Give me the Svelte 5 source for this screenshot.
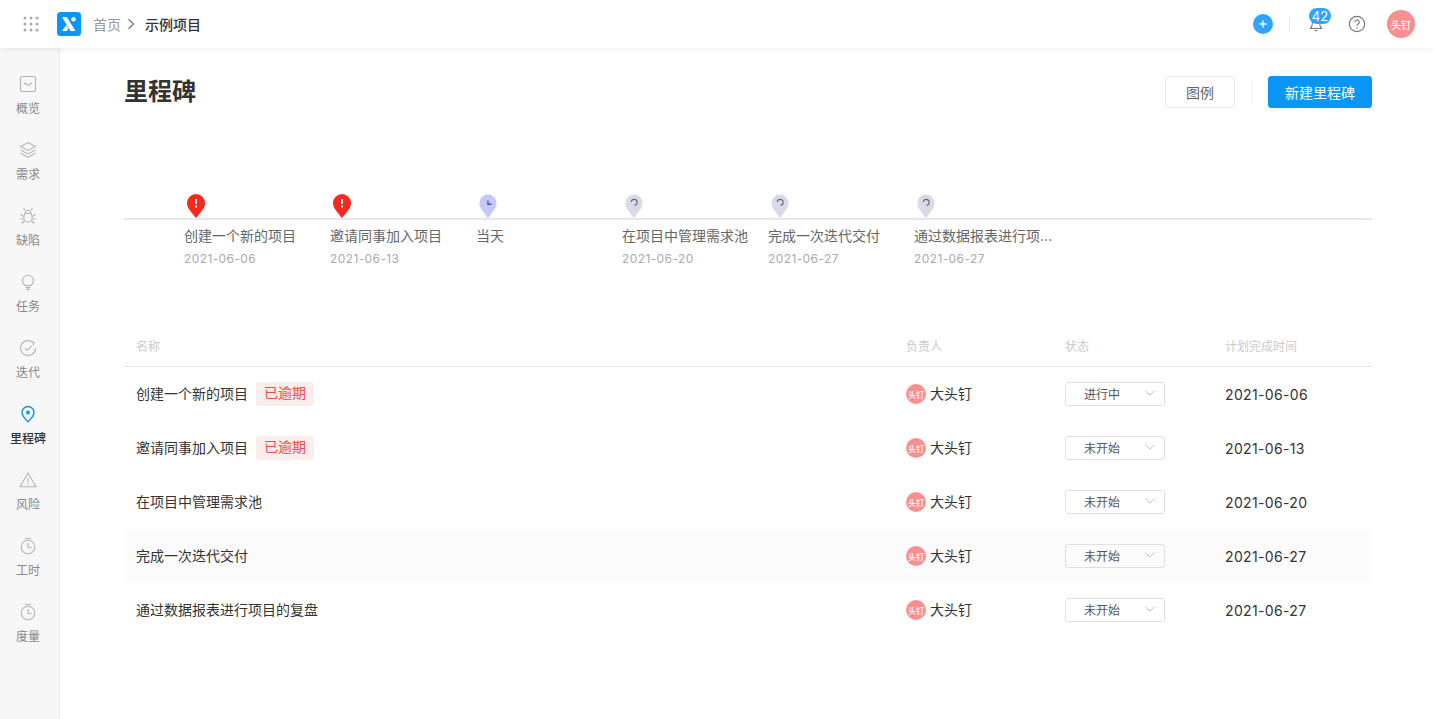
<script lang="ts">
  const nav = [
    { label: '概览', icon: 'overview' },
    { label: '需求', icon: 'layers' },
    { label: '缺陷', icon: 'bug' },
    { label: '任务', icon: 'bulb' },
    { label: '迭代', icon: 'cycle' },
    { label: '里程碑', icon: 'pin', active: true },
    { label: '风险', icon: 'warn' },
    { label: '工时', icon: 'timer' },
    { label: '度量', icon: 'timer' }
  ];

  const milestones = [
    { name: '创建一个新的项目', date: '2021-06-06', kind: 'late' },
    { name: '邀请同事加入项目', date: '2021-06-13', kind: 'late' },
    { name: '当天', date: '', kind: 'today' },
    { name: '在项目中管理需求池', date: '2021-06-20', kind: 'todo' },
    { name: '完成一次迭代交付', date: '2021-06-27', kind: 'todo' },
    { name: '通过数据报表进行项目的复盘', date: '2021-06-27', kind: 'todo' }
  ];

  const rows = [
    { name: '创建一个新的项目', late: true, status: '进行中', date: '2021-06-06' },
    { name: '邀请同事加入项目', late: true, status: '未开始', date: '2021-06-13' },
    { name: '在项目中管理需求池', status: '未开始', date: '2021-06-20' },
    { name: '完成一次迭代交付', status: '未开始', date: '2021-06-27', hover: true },
    { name: '通过数据报表进行项目的复盘', status: '未开始', date: '2021-06-27' }
  ];
</script>

<div class="page">
  <header class="topbar">
    <svg class="apps" width="16" height="16" viewBox="0 0 16 16" fill="#aaa">
      {#each [2, 8, 14] as y}
        {#each [2, 8, 14] as x}
          <circle cx={x} cy={y} r="1.5" />
        {/each}
      {/each}
    </svg>
    <svg class="logo" width="24" height="24" viewBox="0 0 24 24">
      <rect width="24" height="24" rx="3.5" fill="#0a96f4" />
      <path d="M5 5h4.800l8.700 14h-5z" fill="#fff" />
      <path d="M5 19l4.200-5.800 2.300 3.500-1.800 2.300z" fill="#fff" />
      <circle cx="16.500" cy="7.200" r="2.200" fill="#fff" />
    </svg>
    <span class="crumb">首页</span>
    <svg class="crumb-sep" width="8" height="12" viewBox="0 0 8 12" fill="none" stroke="#777" stroke-width="1.2">
      <path d="M1.500 1.200L6.500 6l-5 4.800" />
    </svg>
    <span class="crumb current">示例项目</span>

    <div class="top-actions">
      <svg class="plus" width="20" height="20" viewBox="0 0 20 20">
        <circle cx="10" cy="10" r="10" fill="#2da5fa" />
        <path d="M10 6.500v7M6.500 10h7" stroke="#fff" stroke-width="1.400" />
      </svg>
      <span class="top-divider"></span>
      <span class="bell">
        <svg width="16" height="16" viewBox="0 0 16 16" fill="none" stroke="#777" stroke-width="1.100">
          <path d="M2.500 12.500c1-1 1.700-2 1.700-4.500a3.800 3.800 0 0 1 7.600 0c0 2.500.7 3.500 1.700 4.500z" />
          <path d="M6.500 14.500h3" />
        </svg>
        <span class="bell-count">42</span>
      </span>
      <svg class="help" width="18" height="18" viewBox="0 0 18 18" fill="none" stroke="#777" stroke-width="1.200">
        <circle cx="9" cy="9" r="7.600" />
        <path d="M6.800 7.200a2.200 2.200 0 1 1 3.300 1.900c-.7.400-1.100.8-1.100 1.600" />
        <path d="M9 12.300v1.100" />
      </svg>
      <span class="avatar large">头钉</span>
    </div>
  </header>

  <div class="body">
    <nav class="sidebar">
      {#each nav as item}
        <div class="nav-item" class:active={item.active}>
          <svg width="18" height="18" viewBox="0 0 18 18" fill="none" stroke={item.active ? '#1296f0' : '#b5b5b5'} stroke-width="1.100">
            {#if item.icon === 'overview'}
              <rect x="1.500" y="1.500" width="15" height="15" rx="2" />
              <path d="M5 9.500c1.200-1.500 2-1.500 3 0s2 1.200 3.200-.5c.5-.6 1-.8 1.800-.5" />
            {:else if item.icon === 'layers'}
              <path d="M9 1.500l7.500 4L9 9.500l-7.500-4z" />
              <path d="M1.500 9L9 13l7.500-4" />
              <path d="M1.500 12.200L9 16.300l7.500-4.100" />
            {:else if item.icon === 'bug'}
              <path d="M6 6.500h6c.8 1 1.200 2.200 1.200 3.700 0 2.800-1.700 5-4.200 5s-4.200-2.200-4.200-5c0-1.500.4-2.700 1.200-3.700z" />
              <path d="M6 6.500a3 3 0 0 1 6 0M4.800 9.500L1.500 7.500M13.200 9.500l3.300-2M4.800 12H1.200M13.200 12h3.600M5.500 14l-3 2.500M12.500 14l3 2.500M6 3L4.500 1.500M12 3l1.500-1.500" />
            {:else if item.icon === 'bulb'}
              <path d="M6.300 12.500C4.700 11.500 3.500 9.900 3.500 7.800a5.500 5.500 0 0 1 11 0c0 2.100-1.200 3.700-2.800 4.700z" />
              <path d="M6.500 14.500h5M7.500 16.500h3" stroke-width="1.500" />
            {:else if item.icon === 'cycle'}
              <path d="M14.500 4A7.500 7.500 0 1 0 16.500 9" />
              <path d="M12.500 2.500l2.500 1.500-1 2.500" />
              <path d="M6 9l2.300 2.300L12.500 7" />
            {:else if item.icon === 'pin'}
              <path d="M9 16.800C5.500 13.500 3 10.700 3 7.500a6 6 0 0 1 12 0c0 3.200-2.500 6-6 9.300z" stroke-width="1.400" />
              <circle cx="9" cy="7.500" r="2" fill="#1296f0" stroke="none" />
            {:else if item.icon === 'warn'}
              <path d="M9 2L1 15.800h16z" />
              <path d="M9 7v4.500M9 12.800v1.200" />
            {:else}
              <circle cx="9" cy="10" r="6.800" />
              <path d="M6 1.500h6M9 6v4.500h3.500" />
            {/if}
          </svg>
          <span>{item.label}</span>
        </div>
      {/each}
    </nav>

    <main class="content">
      <div class="title-row">
        <h1>里程碑</h1>
        <div class="title-actions">
          <button class="btn">图例</button>
          <span class="btn-divider"></span>
          <button class="btn primary">新建里程碑</button>
        </div>
      </div>

      <div class="timeline">
        {#each milestones as m}
          <div class="stone">
            <svg class="marker" width="20" height="26" viewBox="0 0 20 26">
              {#if m.kind === 'late'}
                <path d="M10 25C4 18 1 14.500 1 10a9 9 0 0 1 18 0c0 4.500-3 8-9 15z" fill="#f5291c" />
                <path d="M10 6v5" stroke="#fff" stroke-width="2" />
                <path d="M10 12.500v2" stroke="#fff" stroke-width="2" />
              {:else if m.kind === 'today'}
                <path d="M10 25C4.500 18 1.500 14.500 1.500 10a8.500 8.500 0 0 1 17 0c0 4.500-3 8-8.500 15z" fill="#c6c8f7" />
                <path d="M10 7.500v3.700h3.500" fill="none" stroke="#4b4fd0" stroke-width="1.400" />
              {:else}
                <path d="M10 25C4.500 18 1.500 14.500 1.500 10a8.500 8.500 0 0 1 17 0c0 4.500-3 8-8.500 15z" fill="#d8dbe5" />
                <path d="M7.200 9a3 3 0 1 1 3.300 3.400" fill="none" stroke="#666b78" stroke-width="1.100" />
              {/if}
            </svg>
            <div class="stone-name">{m.name}</div>
            {#if m.date}<div class="stone-date">{m.date}</div>{/if}
          </div>
        {/each}
      </div>

      <div class="table">
        <div class="row head">
          <span>名称</span>
          <span>负责人</span>
          <span>状态</span>
          <span>计划完成时间</span>
        </div>
        {#each rows as row}
          <div class="row" class:hover={row.hover}>
            <div class="name">
              <span class="cell-text">{row.name}</span>
              {#if row.late}<span class="tag">已逾期</span>{/if}
            </div>
            <div class="owner"><span class="avatar">头钉</span><span class="cell-text">大头钉</span></div>
            <div>
              <div class="select">
                <span>{row.status}</span>
                <svg width="10" height="6" viewBox="0 0 10 6" fill="none" stroke="#c4c4c4">
                  <path d="M.5.500L5 5 9.500.500" />
                </svg>
              </div>
            </div>
            <div class="date">{row.date}</div>
          </div>
        {/each}
      </div>
    </main>
  </div>
</div>

<style>
  :global(body) {
    margin: 0;
    background: #fff;
    font-family: Inter, 'Noto Sans CJK SC', sans-serif;
    color: #333;
  }

  .page {
    height: 719px;
    overflow: hidden;
  }

  .topbar {
    position: relative;
    z-index: 1;
    display: flex;
    align-items: center;
    height: 48px;
    padding: 0 19px 0 23px;
    box-shadow: 0 1px 6px rgba(0, 0, 0, 0.08);
    background: #fff;
    box-sizing: border-box;
  }
  .apps {
    margin-right: 18px;
  }
  .logo {
    margin-right: 12px;
  }
  .crumb {
    padding-bottom: 1px;
    font-size: 14px;
    color: #999;
  }
  .crumb.current {
    color: #333;
    font-weight: 500;
  }
  .crumb-sep {
    margin: 0 10px 0 6px;
  }

  .top-actions {
    display: flex;
    align-items: center;
    margin-left: auto;
  }
  .top-divider {
    width: 1px;
    height: 16px;
    background: #e8e8e8;
    margin: 0 18px 0 16px;
  }
  .bell {
    position: relative;
    display: flex;
    margin-right: 24px;
  }
  .bell-count {
    position: absolute;
    left: 1px;
    top: -8px;
    width: 22px;
    height: 16px;
    border-radius: 8px;
    background: #2da5fa;
    color: #fff;
    font-size: 13px;
    line-height: 16px;
    text-align: center;
  }
  .help {
    margin-right: 21px;
  }
  .avatar {
    display: inline-flex;
    align-items: center;
    justify-content: center;
    flex: none;
    width: 20px;
    height: 20px;
    border-radius: 50%;
    background: #fa8f8f;
    color: #fff;
    font-size: 8px;
    font-weight: 500;
  }
  .avatar.large {
    width: 28px;
    height: 28px;
    font-size: 10px;
  }

  .body {
    display: flex;
    height: 671px;
  }

  .sidebar {
    flex: none;
    width: 56px;
    padding: 27px 3px 0 0;
    background: #f7f7f7;
    border-right: 1px solid #ececec;
  }
  .nav-item {
    display: flex;
    flex-direction: column;
    align-items: center;
    gap: 7px;
    height: 66px;
    font-size: 12px;
    line-height: 18px;
    color: #888;
  }
  .nav-item.active {
    color: #333;
    font-weight: 500;
  }

  .content {
    flex: 1;
    padding: 0 62px 0 64px;
    min-width: 0;
  }

  .title-row {
    display: flex;
    align-items: center;
    justify-content: space-between;
    padding-top: 28px;
  }
  h1 {
    margin: 0;
    font-size: 24px;
    line-height: 32px;
    font-weight: 700;
    color: #333;
  }
  .title-actions {
    display: flex;
    align-items: center;
  }
  .btn {
    height: 32px;
    width: 70px;
    padding: 0;
    border: 1px solid #e6e6e6;
    border-radius: 3px;
    background: #fff;
    color: #666;
    font: inherit;
    font-size: 14px;
  }
  .btn.primary {
    width: 104px;
    border-color: #0a96f4;
    background: #0a96f4;
    color: #fff;
  }
  .btn-divider {
    width: 1px;
    height: 24px;
    background: #f2f2f2;
    margin: 0 16px;
  }

  .timeline {
    display: flex;
    margin-top: 85px;
    padding-left: 60px;
    height: 105px;
    background: linear-gradient(#e6e6ec, #e6e6ec) no-repeat 0 25px / 100% 2px;
  }
  .stone {
    width: 146px;
    box-sizing: border-box;
    padding-right: 6px;
    font-size: 14px;
  }
  .marker {
    display: block;
    margin-left: 2px;
  }
  .stone-name {
    margin-top: 7px;
    line-height: 20px;
    color: #666;
    white-space: nowrap;
    overflow: hidden;
    text-overflow: ellipsis;
  }
  .stone-date {
    margin-top: 4px;
    font-size: 12px;
    line-height: 18px;
    letter-spacing: 0.4px;
    color: #aaa;
  }

  .table {
    margin-top: 26px;
  }
  .row {
    display: grid;
    grid-template-columns: 770px 159px 160px 1fr;
    align-items: center;
    height: 54px;
    padding-left: 12px;
    font-size: 14px;
    color: #333;
  }
  .row.head {
    height: 42px;
    border-bottom: 1px solid #e6e6e6;
    font-size: 12px;
    color: #cacaca;
  }
  .row.hover {
    background: linear-gradient(#fbfbfb, #fbfbfb) no-repeat 0 1px / 100% 52px;
  }
  .name,
  .owner {
    display: flex;
    align-items: center;
  }
  .cell-text {
    padding-bottom: 2px;
  }
  .tag {
    margin-left: 8px;
    padding: 0 8px;
    height: 24px;
    line-height: 22px;
    border-radius: 3px;
    background: #fdeeee;
    color: #ef4b45;
  }
  .owner .avatar {
    margin-right: 4px;
  }
  .select {
    display: flex;
    align-items: center;
    justify-content: space-between;
    box-sizing: border-box;
    width: 100px;
    height: 24px;
    padding: 0 9px 2px 18px;
    border: 1px solid #e0e0e0;
    border-radius: 3px;
    font-size: 12px;
    color: #555;
  }
  .date {
    letter-spacing: 0.35px;
  }
</style>
